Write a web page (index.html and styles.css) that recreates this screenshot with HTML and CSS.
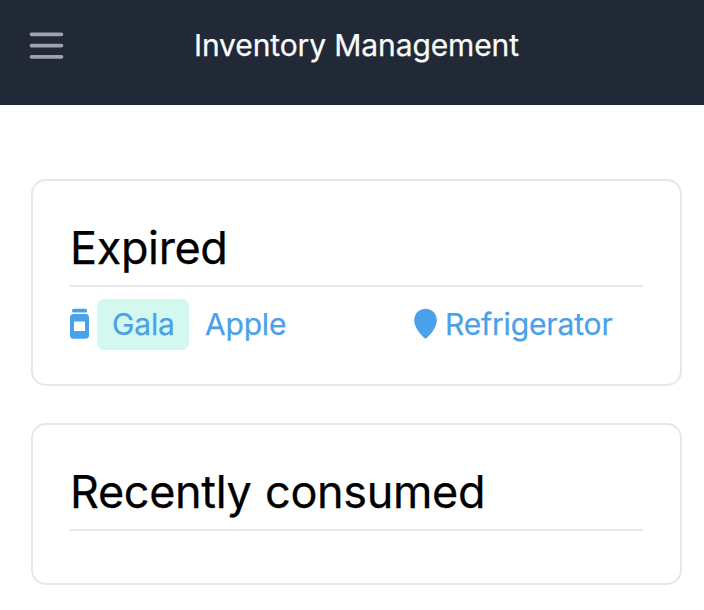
FILE: index.html
```html
<!DOCTYPE html>
<html lang="en">
<head>
<meta charset="utf-8">
<title>Inventory Management</title>
<link rel="stylesheet" href="styles.css">
</head>
<body>
<header class="topbar">
  <button class="menu" aria-label="Menu">
    <svg width="45" height="45" viewBox="0 0 24 24" fill="none" stroke="currentColor" stroke-width="2" stroke-linecap="round"><path d="M4 6h16M4 12h16M4 18h16"/></svg>
  </button>
  <h1 class="title">Inventory Management</h1>
</header>
<main class="content">
  <section class="card card-filled">
    <h2 class="heading">Expired</h2>
    <div class="row">
      <div class="item">
        <svg class="jar" width="20" height="32" viewBox="0 0 20 32" fill="currentColor"><rect x="2" y=".8" width="15" height="3.7" rx="1.500"/><path fill-rule="evenodd" d="M3.500 6h12A3.500 3.500 0 0 1 19 9.500v17.700A3.500 3.500 0 0 1 15.500 30.700h-12A3.500 3.500 0 0 1 0 27.200V9.500A3.500 3.500 0 0 1 3.500 6zM4 13.500V23h11v-9.500z"/></svg>
        <span class="tag">Gala</span>
        <span class="name">Apple</span>
      </div>
      <div class="place">
        <svg class="pin" width="24" height="32" viewBox="0 0 24 32" fill="currentColor"><path d="M11.500.800C5 .8.200 5.800.200 12.200c0 6 5 13.200 9.900 17.600q1.400 1.200 2.800 0c4.900-4.400 9.900-11.600 9.900-17.600C22.800 5.800 18 .8 11.500.8z"/></svg>
        <span>Refrigerator</span>
      </div>
    </div>
  </section>
  <section class="card card-empty">
    <h2 class="heading">Recently consumed</h2>
  </section>
</main>
</body>
</html>
```
FILE: styles.css
```css
* { box-sizing: border-box; }
body { margin: 0; background: #fff; font-family: Inter, sans-serif; color: #000; -webkit-text-stroke: 0.25px currentColor; }
.topbar { display: flex; height: 105px; padding: 21px 22px; background: #222936; }
.menu { width: 48px; height: 48px; padding: 2px 1.5px; border: 0; background: none; color: #9ca3af; }
.menu svg { display: block; }
.title { margin: 0 0 0 124px; font-size: 30px; line-height: 48px; font-weight: 400; letter-spacing: -0.11px; color: #f9fafb; white-space: nowrap; }
.content { display: flex; flex-direction: column; gap: 37px; padding: 74px 22px 0 31px; }
.card { padding: 36px 37px; border: 2px solid #e5e7eb; border-radius: 15px; }
.card-filled { height: 207px; }
.card-empty { height: 162px; }
.heading { height: 70px; margin: 0; border-bottom: 2px solid #e5e7eb; font-size: 45px; line-height: 61px; font-weight: 400; letter-spacing: -0.36px; word-spacing: 1.5px; white-space: nowrap; }
.row { display: flex; align-items: center; margin-top: 11px; color: #4aa1e9; font-size: 30px; line-height: 51px; letter-spacing: -0.15px; }
.item { display: flex; align-items: center; width: 344px; }
.jar, .pin { flex: none; }
.tag { width: 92px; height: 51px; margin-left: 7px; padding-left: 15px; border-radius: 7px; background: #d3f8f0; }
.name { margin-left: 16px; padding-top: 1px; letter-spacing: -0.2px; }
.place { display: flex; align-items: center; gap: 7px; }
.place span { padding-top: 1px; }
```
